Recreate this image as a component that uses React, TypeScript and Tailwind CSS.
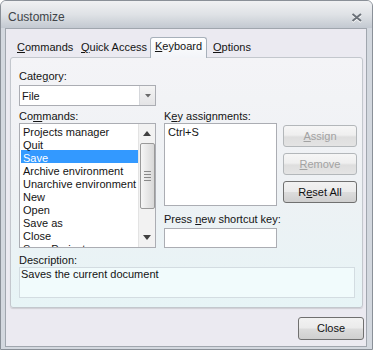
import type { ReactNode } from "react";

function U({ children }: { children: ReactNode }) {
  return <span className="underline decoration-1 underline-offset-[1px]">{children}</span>;
}

function Btn({ children, disabled, className = "" }: { children: ReactNode; disabled?: boolean; className?: string }) {
  return (
    <div
      className={
        "flex items-center justify-center rounded-[3px] border " +
        (disabled
          ? "border-[#b3b7ba] text-[#a2a2a2] bg-[linear-gradient(#f6f6f6,#efefef_45%,#dedede_55%,#e4e4e4)] "
          : "border-[#707070] text-[#111] bg-[linear-gradient(#f2f2f2,#ebebeb_48%,#dcdcdc_52%,#cfcfcf)] ") +
        className
      }
    >
      {children}
    </div>
  );
}

const commands = [
  "Projects manager",
  "Quit",
  "Save",
  "Archive environment",
  "Unarchive environment",
  "New",
  "Open",
  "Save as",
  "Close",
  "Save Project",
];

export default function App() {
  return (
    <div className="w-[373px] h-[350px] flex flex-col bg-[#d3d8df] border border-[#8a9098] rounded-t-[6px] overflow-hidden font-['Liberation_Sans',Arial,sans-serif] text-[11px] leading-[13px] text-[#141414]">
      {/* title bar */}
      <div className="h-[27px] shrink-0 flex items-start justify-between pl-[7px] pr-[9px] pt-[9px] bg-linear-to-b from-[#f0f1f3] via-[#dfe2e6] to-[#c3c9d1]">
        <span className="text-[12px] leading-[14px] text-[#404448]">Customize</span>
        <svg width="12" height="10" viewBox="0 0 12 10" className="mt-[3px]">
          <path d="M1.5 2 L10 9 M10 2 L1.5 9" stroke="#ffffff" strokeWidth="2" />
          <path d="M1.5 1 L10 8 M10 1 L1.5 8" stroke="#6b7179" strokeWidth="2" />
        </svg>
      </div>

      {/* body */}
      <div className="flex-1 ml-[4px] mr-[5px] mb-[2px] border border-[#a0a6ae] bg-[#ebeaf1] pl-[4px] pr-[3px] pt-[8px] flex flex-col">
        {/* tabs */}
        <div className="flex h-[20px] items-end whitespace-nowrap">
          <div className="w-[65px] h-[20px] pl-[7px] pt-[4px]">
            <U>C</U>ommands
          </div>
          <div className="w-[75px] h-[20px] pl-[6px] pt-[4px]">
            <U>Q</U>uick Access
          </div>
          <div className="relative z-10 -mb-px w-[57px] h-[21px] pt-[2px] text-center border border-b-0 border-[#a7b0ba] rounded-t-[3px] bg-linear-to-b from-[#ffffff] to-[#f2f4f8]">
            <U>K</U>eyboard
          </div>
          <div className="h-[20px] pl-[6px] pt-[4px]">
            <U>O</U>ptions
          </div>
        </div>

        {/* panel */}
        <div className="h-[251px] border border-[#c3c7cd] rounded-[3px] bg-linear-to-b from-[#f4f4f7] via-[#eef1f4] to-[#e7f4f6] shadow-[0_1px_1px_rgba(0,0,0,0.12)] pl-[8px] pt-[12px]">
          <div>
            Cate<U>g</U>ory:
          </div>
          <div className="mt-[2px] w-[137px] h-[21px] flex border border-[#abadb3] bg-white">
            <div className="flex-1 flex items-center pl-[2px] pt-[1px]">File</div>
            <div className="w-[16px] flex items-center justify-center border-l border-[#d5d7db] bg-linear-to-b from-[#f4f4f4] to-[#e4e4e6]">
              <svg width="6" height="4" viewBox="0 0 6 4">
                <path d="M0 0 H6 L3 3.5 Z" fill="#6a6a6a" />
              </svg>
            </div>
          </div>

          <div className="mt-[4px] flex gap-[8px]">
            {/* commands */}
            <div className="w-[137px]">
              <div>
                Co<U>m</U>mands:
              </div>
              <div className="h-[125px] flex border border-[#abadb3] bg-white overflow-hidden">
                <div className="flex-1 overflow-hidden">
                  {commands.map((c) => (
                    <div
                      key={c}
                      className={
                        "h-[13px] pt-[2px] pl-[2px] ml-px whitespace-nowrap " +
                        (c === "Save" ? "bg-[#3399ff] text-white" : "")
                      }
                    >
                      {c}
                    </div>
                  ))}
                </div>
                <div className="w-[17px] flex flex-col items-center border-l border-[#e3e3e3] bg-[#f2f2f2]">
                  <svg width="8" height="5" viewBox="0 0 8 5" className="mt-[7px]">
                    <path d="M0 5 L4 0 L8 5 Z" fill="#404040" />
                  </svg>
                  <div className="mt-[7px] w-[15px] h-[66px] rounded-[2px] border border-[#9a9a9a] bg-linear-to-r from-[#f6f6f6] to-[#d8d8d8] flex flex-col items-center justify-center gap-[2px]">
                    <div className="w-[7px] h-px bg-[#8a8a8a]" />
                    <div className="w-[7px] h-px bg-[#8a8a8a]" />
                    <div className="w-[7px] h-px bg-[#8a8a8a]" />
                    <div className="w-[7px] h-px bg-[#8a8a8a]" />
                  </div>
                  <svg width="8" height="5" viewBox="0 0 8 5" className="mt-auto mb-[7px]">
                    <path d="M0 0 L8 0 L4 5 Z" fill="#404040" />
                  </svg>
                </div>
              </div>
            </div>

            {/* key assignments */}
            <div className="w-[113px]">
              <div>
                K<U>e</U>y assignments:
              </div>
              <div className="h-[83px] border border-[#abadb3] bg-white pl-[3px] pt-[2px]">Ctrl+S</div>
              <div className="mt-[7px] whitespace-nowrap">
                Press <U>n</U>ew shortcut key:
              </div>
              <div className="mt-[2px] h-[20px] border border-[#abadb3] bg-white" />
            </div>

            {/* buttons */}
            <div className="w-[74px] ml-[-2px] pt-[15px] flex flex-col gap-[6px]">
              <Btn disabled className="h-[22px]">
                <U>A</U>ssign
              </Btn>
              <Btn disabled className="h-[22px]">
                <U>R</U>emove
              </Btn>
              <Btn className="h-[22px]">
                R<U>e</U>set All
              </Btn>
            </div>
          </div>

          <div className="mt-[6px]">Description:</div>
          <div className="w-[336px] h-[31px] border border-[#d3dce1] bg-[#f1fbfc] pl-[1px]">Saves the current document</div>
        </div>

        <div className="mt-[9px] flex justify-end">
          <Btn className="w-[66px] h-[23px] -mr-px">Close</Btn>
        </div>
      </div>
    </div>
  );
}
